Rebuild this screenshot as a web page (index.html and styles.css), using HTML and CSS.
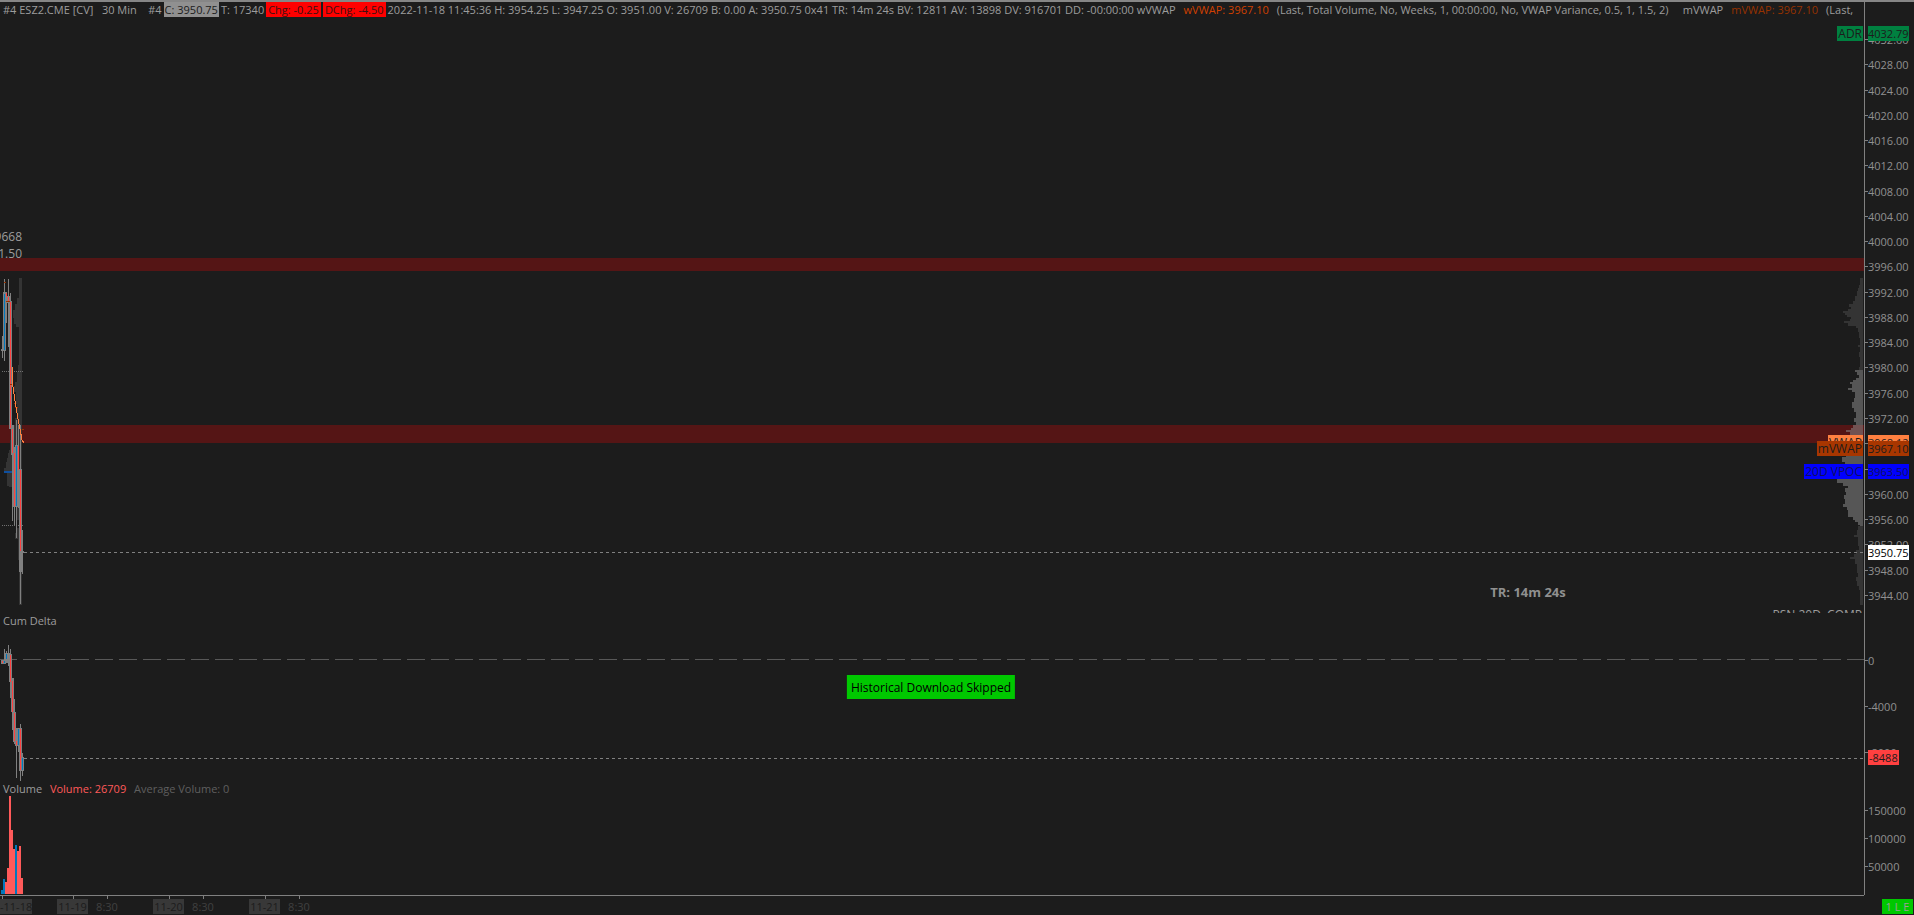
FILE: index.html
```html
<!DOCTYPE html>
<html lang="en">
<head>
  <meta charset="UTF-8">
  <meta name="viewport" content="width=device-width, initial-scale=1.0">
  <title>#4 ESZ2.CME [CV] 30 Min</title>
  <link rel="stylesheet" href="styles.css">
</head>
<body>

<main class="chart">

  <!-- Price -->
  <section class="panel price">
    <div class="plot">
      <header class="info">
        <span>#4 ESZ2.CME [CV]&nbsp;&nbsp; 30 Min&nbsp;&nbsp;&nbsp; #4</span>
        <span class="box close">C: 3950.75</span>
        <span>T: 17340</span>
        <span class="box down">Chg: -0.25</span>
        <span class="box down">DChg: -4.50</span>
        <span>2022-11-18 11:45:36 H: 3954.25 L: 3947.25 O: 3951.00 V: 26709 B: 0.00 A: 3950.75 0x41 TR: 14m 24s BV: 12811 AV: 13898 DV: 916701 DD: -00:00:00 wVWAP</span>
        <span class="study wvwap">wVWAP: 3967.10</span>
        <span class="study">(Last, Total Volume, No, Weeks, 1, 00:00:00, No, VWAP Variance, 0.5, 1, 1.5, 2)&nbsp;&nbsp;&nbsp;&nbsp; mVWAP</span>
        <span class="study mvwap">mVWAP: 3967.10</span>
        <span class="study">(Last,</span>
      </header>

      <div class="canvas">
        <svg class="layer zones" viewBox="0 0 100 593" preserveAspectRatio="none" aria-hidden="true">
          <rect x="0" y="238" width="100" height="13"/>
          <rect x="0" y="405" width="100" height="18"/>
        </svg>

        <svg class="bars" viewBox="0 0 24 593" preserveAspectRatio="none" aria-hidden="true">
          <!-- session profile -->
          <path class="profile" d="M22 258H19V278H17V284H15V290H13V298H14V304H16V307H19V345H18V352H17V362H15V366H14V372H16V384H17V398H15V405H12V420H10V430H9V433H8V438H7V442H6V448H4V453H7V466H9V467H12V470H14V486H17V500H19V508H17V513H15V519H18V540H19V585H22Z"/>
          <path class="dots" d="M2 351H24M2 505H24"/>
          <!-- wicks and bodies -->
          <path class="wick" d="M2 316h1v22h-1zM1 329h4v2h-4zM4 259h1v82h-1zM3 272h3v59h-3zM6 272h1v31h-1zM8 259h1v68h-1zM6 276h5v7h-5zM10 273h1v11h-1zM9 281h3v128h-3zM11 405h3v30h-3zM12 408h1v93h-1zM13 432h3v55h-3zM14 427h1v78h-1zM15 425h3v62h-3zM16 400h1v118h-1zM18 405h1v83h-1zM19 449h3v103h-3zM20 405h1v179h-1zM22 510h1v44h-1zM20 531h4v2h-4z"/>
          <path class="up" d="M4 274h1v56h-1zM16 426h1v60h-1z"/>
          <path class="dn" d="M6 273h1v4h-1zM8 277h1v4h-1zM10 282h1v126h-1zM12 409h1v24h-1zM14 433h1v53h-1zM18 426h1v24h-1zM20 450h1v81h-1z"/>
          <path class="vpoc" d="M4 451h8v2h-8z"/>
          <path class="marks" d="M4 262h2M6 281h4M10 364h2M14 383h2M15 387h3M22 409h2"/>
          <path class="vwap" d="M12 347V360L14 374L16 387L18 399L20 409L22 420L24 423"/>
        </svg>

        <!-- composite profile, grows to the left from the price scale -->
        <svg class="composite" viewBox="0 0 40 593" preserveAspectRatio="none" aria-hidden="true">
          <path class="outer" d="M40 258H37V265H36V268H35V271H34V276H32V281H30V284H26V287H28V289H25V291H20V293H22V295H24V297H28V299H27V301H21V303H25V306H33V308H35V312H36V318H37V325H35V327H37V332H36V337H37V347H36V350H40Z"/>
          <path class="value" d="M40 350H32V352H34V355H36V358H33V360H30V362H27V364H29V368H25V370H29V372H32V378H31V382H29V388H31V392H33V398H31V402H33V405H30V408H28V410H23V412H27V415H24V418H22V422H25V427H21V433H23V437H19V442H22V446H18V451H15V458H14V463H20V466H25V468H22V472H23V475H21V479H22V484H20V487H24V490H25V497H30V500H32V502H35V505H37V506H40Z"/>
          <path class="outer" d="M40 506H35V510H34V515H31V517H35V526H36V530H33V534H31V537H27V539H32V544H34V553H35V557H33V561H34V566H36V570H37V585H40Z"/>
        </svg>

        <svg class="layer" aria-hidden="true">
          <line class="last-line" x1="24" x2="100%" y1="89.8%" y2="89.8%"/>
        </svg>

        <div class="bar-note">9668<br>1.50</div>
        <div class="countdown">TR: 14m 24s</div>
        <div class="clipped">PSN 20D&nbsp; COMP</div>
      </div>
    </div>

    <ol class="scale">
      <li>4032.00</li><li>4028.00</li><li>4024.00</li><li>4020.00</li><li>4016.00</li>
      <li>4012.00</li><li>4008.00</li><li>4004.00</li><li>4000.00</li><li>3996.00</li>
      <li>3992.00</li><li>3988.00</li><li>3984.00</li><li>3980.00</li><li>3976.00</li>
      <li>3972.00</li><li>3968.00</li><li>3964.00</li><li>3960.00</li><li>3956.00</li>
      <li>3952.00</li><li>3948.00</li><li>3944.00</li>
    </ol>

    <div class="tag adr"><span>ADR</span><b>4032.79</b></div>
    <div class="tag day-vwap"><span>VWAP</span><b>3968.12</b></div>
    <div class="tag month-vwap"><span>mVWAP</span><b>3967.10</b></div>
    <div class="tag poc"><span>20D VPOC</span><b>3963.50</b></div>
    <div class="tag last"><b>3950.75</b></div>
  </section>

  <!-- Cumulative delta -->
  <section class="panel delta">
    <div class="plot">
      <h2 class="title">Cum Delta</h2>
      <svg class="layer" aria-hidden="true">
        <line class="zero-line" x1="-1" x2="100%" y1="46" y2="46"/>
        <line class="last-line" x1="24" x2="100%" y1="145" y2="145"/>
        <path class="wick" d="M1 47h5v4h-5zM4 36h1v15h-1zM5 40h5v10h-5zM6 38h1v12h-1zM8 32h1v21h-1zM10 36h1v6h-1zM9 41h3v28h-3zM10 60h1v25h-1zM11 65h3v34h-3zM12 80h1v37h-1zM13 99h3v30h-3zM14 86h1v45h-1zM15 115h3v18h-3zM16 123h1v42h-1zM17 115h3v18h-3zM18 115h1v24h-1zM19 115h3v43h-3zM20 111h1v57h-1zM21 144h3v14h-3zM22 140h1v23h-1z"/>
        <path class="dn" d="M2 48h1v2h-1zM10 42h1v27h-1zM12 68h1v31h-1zM14 100h1v28h-1zM16 128h1v4h-1zM20 116h1v41h-1z"/>
        <path class="up" d="M4 48h1v2h-1zM6 41h1v5h-1zM18 116h1v16h-1zM22 145h1v12h-1z"/>
      </svg>
    </div>
    <ol class="scale">
      <li>0</li><li>-4000</li><li>-8000</li>
    </ol>
    <div class="tag delta-last"><b>-8488</b></div>
  </section>

  <!-- Volume -->
  <section class="panel volume">
    <div class="plot">
      <h2 class="title">Volume <span class="vol-now">Volume: 26709</span> <span class="vol-avg">Average Volume: 0</span></h2>
      <svg class="layer" aria-hidden="true">
        <path class="vol-up" d="M1 109h2v4h-2zM3 98h2v15h-2zM15 64h2v49h-2z"/>
        <path class="vol-dn" d="M5 101h2v12h-2zM7 87h2v26h-2zM9 15h2v98h-2zM11 49h2v64h-2zM13 68h2v45h-2zM17 70h2v43h-2zM19 65h2v48h-2zM21 97h2v16h-2z"/>
      </svg>
    </div>
    <ol class="scale">
      <li>150000</li><li>100000</li><li>50000</li>
    </ol>
  </section>

  <footer class="dates">
    <div class="days">
      <div class="day first"><time>-11-18</time></div>
      <div class="day"><time>11-19</time><span>8:30</span></div>
      <div class="day"><time>11-20</time><span>8:30</span></div>
      <div class="day"><time>11-21</time><span>8:30</span></div>
    </div>
    <div class="flags">1 L E</div>
  </footer>

  <div class="notice" role="status">Historical Download Skipped</div>
</main>

</body>
</html>
```

FILE: styles.css
```css
* {
  box-sizing: border-box;
}

body {
  margin: 0;
  background: #1c1c1c;
  color: #9c9c9c;
  font-family: "Open Sans", "Noto Sans", sans-serif;
  font-size: 11px;
  line-height: 15px;
}

.chart {
  position: relative;
  display: flex;
  flex-direction: column;
  min-height: 100vh;
  border-top: 2px solid #868686;
  overflow: hidden;
}

/* Panels: plot on the left, value scale on the right */
.panel {
  position: relative;
  display: grid;
  grid-template-columns: minmax(0, 1fr) 50px;
}

.price {
  flex: 1;
  min-height: 480px;
}

.delta {
  height: 168px;
}

.volume {
  height: 114px;
}

.plot {
  position: relative;
  display: flex;
  flex-direction: column;
  overflow: hidden;
}

.canvas {
  position: relative;
  flex: 1;
}

/* Header line */
.info {
  display: flex;
  gap: 2px;
  height: 18px;
  padding-left: 3px;
  white-space: nowrap;
  overflow: hidden;
}

.box {
  height: 15px;
  padding: 0 1px;
  color: #1c1c1c;
}

.close {
  background: #909090;
}

.down {
  padding: 0 2px;
  background: #ff0000;
  color: #401010;
}

.study {
  margin-left: 6px;
}

.wvwap {
  color: #d04000;
}

.mvwap {
  color: #963200;
}

.title {
  margin: 0;
  padding-left: 3px;
  font-size: 11px;
  font-weight: normal;
  line-height: 16px;
}

.vol-now {
  margin-left: 5px;
  color: #ff5a5a;
}

.vol-avg {
  margin-left: 5px;
  color: #5f5f5f;
}

/* Drawing layers */
.layer {
  position: absolute;
  inset: 0;
  width: 100%;
  height: 100%;
}

svg {
  shape-rendering: crispEdges;
}

.zones {
  fill: #551515;
}

.bars {
  position: absolute;
  top: 0;
  left: 0;
  width: 24px;
  height: 100%;
}

.composite {
  position: absolute;
  top: 0;
  right: 1px;
  width: 40px;
  height: 100%;
}

.outer,
.profile {
  fill: #343434;
}

.value {
  fill: #909090;
  fill-opacity: 0.5;
}

.wick {
  fill: #808080;
}

.up {
  fill: #0078be;
}

.dn {
  fill: #ff4040;
}

.vol-up {
  fill: #0078be;
}

.vol-dn {
  fill: #ff5a5a;
}

.vpoc {
  fill: #0f50a0;
}

.dots {
  stroke: #707070;
  stroke-dasharray: 1 1;
}

.marks {
  stroke: #963200;
}

.vwap {
  fill: none;
  stroke: #ff8040;
}

.last-line {
  stroke: #808080;
  stroke-dasharray: 3 3;
}

.zero-line {
  stroke: #585858;
  stroke-dasharray: 18 6;
}

.bar-note {
  position: absolute;
  top: 208px;
  left: 0;
  width: 22px;
  display: flex;
  justify-content: flex-end;
  font-size: 12px;
  line-height: 17px;
  text-align: right;
}

.countdown {
  position: absolute;
  right: 16%;
  bottom: 13px;
  color: #909090;
  font-size: 13px;
  font-weight: bold;
  line-height: 16px;
}

.clipped {
  position: absolute;
  right: 2px;
  bottom: 0;
  height: 3px;
  font-size: 12px;
  line-height: 10px;
  overflow: hidden;
}

/* Value scales */
.scale {
  display: flex;
  flex-direction: column;
  justify-content: space-between;
  margin: 0;
  padding: 0;
  border-left: 1px solid #808080;
  color: #909090;
  list-style: none;
}

.scale li {
  display: flex;
  align-items: center;
}

.scale li::before {
  content: "";
  width: 3px;
  height: 1px;
  background: #808080;
}

.price .scale {
  padding: 30px 0 10px;
}

.delta .scale {
  padding: 40px 0 21px;
}

.volume .scale {
  padding: 22px 0 21px;
}

/* Coloured price tags over the scale */
.tag {
  position: absolute;
  right: 5px;
  display: flex;
  gap: 5px;
  color: #1c1c1c;
  z-index: 2;
}

.tag b {
  width: 41px;
  font-weight: normal;
}

.tag span {
  padding: 0 1px;
  font-size: 12px;
}

.adr {
  top: 4%;
}

.adr b,
.adr span {
  background: #008040;
}

.day-vwap {
  top: 70.8%;
}

.day-vwap b,
.day-vwap span {
  background: #ff8040;
}

.month-vwap {
  top: 71.8%;
}

.month-vwap b,
.month-vwap span {
  background: #a83600;
}

.poc {
  top: 75.6%;
  color: #101060;
}

.poc b,
.poc span {
  background: #0000ff;
}

.last {
  top: 88.9%;
}

.last b {
  background: #ffffff;
  color: #000000;
}

.delta-last {
  top: 137px;
  right: 15px;
}

.delta-last b {
  width: 31px;
  padding-left: 1px;
  background: #ff4040;
}

/* Date scale */
.dates {
  display: grid;
  grid-template-columns: minmax(0, 1fr) 50px;
  height: 20px;
}

.days {
  display: flex;
  border-top: 1px solid #808080;
}

.day {
  display: flex;
  gap: 8px;
  width: 96px;
}

.day time,
.day span {
  position: relative;
  height: 15px;
  margin-top: 3px;
  text-align: center;
  white-space: nowrap;
}

.day time {
  width: 31px;
  background: #383838;
  color: #1c1c1c;
}

.day span {
  width: 22px;
  color: #404040;
}

.day time::before,
.day span::before {
  content: "";
  position: absolute;
  top: -3px;
  left: 50%;
  width: 1px;
  height: 3px;
  background: #808080;
}

.day.first {
  width: 57px;
}

.day.first time {
  width: 32px;
}

.day.first time::before {
  left: 2px;
}

.flags {
  justify-self: end;
  width: 31px;
  height: 15px;
  margin: 4px 1px 0 0;
  background: #00c800;
  text-align: center;
}

/* Centred over the plot, not over the 50px scale */
.notice {
  position: absolute;
  top: 673px;
  left: calc(50% - 26px);
  padding: 5px 4px 3px;
  transform: translateX(-50%);
  background: #00c800;
  color: #000000;
  font-size: 12px;
  line-height: 16px;
  z-index: 3;
}
```
